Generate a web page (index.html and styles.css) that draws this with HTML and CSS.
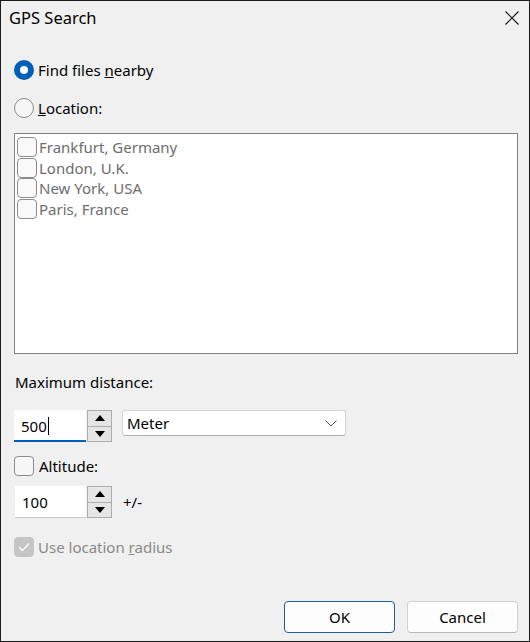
FILE: index.html
```html
<!DOCTYPE html>
<html>
<head>
<meta charset="utf-8">
<link rel="stylesheet" href="styles.css">
</head>
<body>
<div class="window">
  <div class="titlebar">
    <span class="title">GPS Search</span>
    <svg class="close" width="16" height="16" viewBox="0 0 16 16"><path d="M1.5 1.5 L14.5 14.5 M14.5 1.5 L1.5 14.5" stroke="#1a1a1a" stroke-width="1.2" fill="none"/></svg>
  </div>
  <div class="content">
    <div class="row radio-row first">
      <span class="radio checked"></span><span class="label">Find files <u>n</u>earby</span>
    </div>
    <div class="row radio-row second">
      <span class="radio"></span><span class="label"><u>L</u>ocation:</span>
    </div>
    <div class="listbox">
      <div class="item"><span class="cb"></span><span>Frankfurt, Germany</span></div>
      <div class="item"><span class="cb"></span><span>London, U.K.</span></div>
      <div class="item"><span class="cb"></span><span>New York, USA</span></div>
      <div class="item"><span class="cb"></span><span>Paris, France</span></div>
    </div>
    <div class="row section-label">Maximum distance:</div>
    <div class="row spin-row">
      <div class="spin">
        <div class="spin-input focused"><span>500</span><span class="caret"></span></div>
        <div class="spin-btns">
          <div class="sbtn"><svg width="10" height="6" viewBox="0 0 10 6"><path d="M0 6 L5 0 L10 6 Z" fill="#000"/></svg></div>
          <div class="sbtn"><svg width="10" height="6" viewBox="0 0 10 6"><path d="M0 0 L5 6 L10 0 Z" fill="#000"/></svg></div>
        </div>
      </div>
      <div class="combo"><span>Meter</span><svg width="12" height="7" viewBox="0 0 12 7"><path d="M0.5 0.5 L6 6 L11.5 0.5" stroke="#555" stroke-width="1" fill="none"/></svg></div>
    </div>
    <div class="row check-row altitude">
      <span class="box"></span><span class="label">Altitude:</span>
    </div>
    <div class="row spin-row second-spin">
      <div class="spin">
        <div class="spin-input"><span>100</span></div>
        <div class="spin-btns">
          <div class="sbtn"><svg width="10" height="6" viewBox="0 0 10 6"><path d="M0 6 L5 0 L10 6 Z" fill="#000"/></svg></div>
          <div class="sbtn"><svg width="10" height="6" viewBox="0 0 10 6"><path d="M0 0 L5 6 L10 0 Z" fill="#000"/></svg></div>
        </div>
      </div>
      <span class="plusminus">+/-</span>
    </div>
    <div class="row check-row radius">
      <span class="box disabled-checked"><svg width="12" height="10" viewBox="0 0 12 10"><path d="M1 5 L4.5 8.5 L11 1.5" stroke="#fff" stroke-width="1.3" fill="none"/></svg></span><span class="label disabled">Use location <u>r</u>adius</span>
    </div>
    <div class="buttons">
      <div class="btn default">OK</div>
      <div class="btn">Cancel</div>
    </div>
  </div>
</div>
</body>
</html>
```
FILE: styles.css
```css
* { box-sizing: border-box; }
html, body { margin: 0; padding: 0; }
body {
  font-family: "Noto Sans", "Open Sans", sans-serif;
  font-size: 15px;
  color: #000;
  background: #f0f0f0;
}
.window {
  width: 530px;
  height: 642px;
  border: 1px solid #1a1a1a;
  background: #f0f0f0;
  display: flex;
  flex-direction: column;
}
.titlebar {
  height: 33px;
  display: flex;
  align-items: center;
  justify-content: space-between;
  padding: 0 9px 0 8px;
}
.title { font-size: 16.5px; }
.content {
  flex: 1;
  display: flex;
  flex-direction: column;
  padding: 0 11px 8px 13px;
}
.row { display: flex; align-items: center; }
.radio-row { height: 24px; }
.radio-row.first { margin-top: 24px; }
.radio-row.second { margin-top: 14px; }
.radio {
  width: 20px; height: 20px;
  border-radius: 50%;
  border: 1px solid #8a8a8a;
  background: #f7f7f7;
  margin-right: 4px;
  flex: none;
}
.radio.checked {
  border: none;
  background: #005fb8;
  position: relative;
}
.radio.checked::after {
  content: "";
  position: absolute;
  left: 6px; top: 6px;
  width: 8px; height: 8px;
  border-radius: 50%;
  background: #fff;
}
.listbox {
  margin-top: 13px;
  height: 221px;
  background: #fff;
  border: 1px solid #828282;
  padding: 3px 0 0 2px;
  color: #6d6d6d;
}
.item {
  display: flex;
  align-items: center;
  height: 20.6px;
}
.cb {
  width: 20px; height: 20px;
  border: 1px solid #8c8c8c;
  border-radius: 4px;
  background: #f9f9f9;
  margin-right: 2px;
  flex: none;
}
.section-label { margin-top: 16px; height: 24px; padding-left: 1px; }
.spin-row { margin-top: 16px; height: 32px; align-items: flex-start; }
.spin { display: flex; height: 32px; }
.spin-input {
  width: 72px;
  height: 32px;
  background: #fff;
  border-bottom: 1px solid #c8c8c8;
  display: flex;
  align-items: center;
  padding-left: 7px;
}
.spin-input.focused { border-bottom: 2px solid #005fb8; padding-top: 1px; }
.caret { width: 1px; height: 18px; background: #000; margin-left: 1px; }
.spin-btns {
  width: 25px;
  display: flex;
  flex-direction: column;
  margin-left: 1px;
}
.sbtn {
  flex: 1;
  border: 1px solid #adadad;
  background: #e5e5e5;
  display: flex;
  align-items: center;
  justify-content: center;
}
.sbtn + .sbtn { border-top: none; }
.combo {
  margin-left: 10px;
  width: 224px;
  height: 26px;
  background: #fff;
  border: 1px solid #d6d6d6;
  border-bottom-color: #b0b0b0;
  border-radius: 3px;
  display: flex;
  align-items: center;
  justify-content: space-between;
  padding: 0 8px 0 4px;
}
.check-row { height: 22px; }
.altitude { margin-top: 13px; }
.box {
  width: 20px; height: 20px;
  border: 1px solid #8a8a8a;
  border-radius: 4px;
  background: #f7f7f7;
  margin-right: 5px;
  flex: none;
  display: flex;
  align-items: center;
  justify-content: center;
}
.box.disabled-checked { background: #c5c5c5; border-color: #c5c5c5; margin-right: 4px; }
.second-spin { margin-top: 9px; }
.second-spin .spin-input { margin-left: 1px; width: 71px; }
.plusminus { margin-left: 11px; align-self: center; }
.radius { margin-top: 18px; }
.label.disabled { color: #8a8a8a; }
.buttons {
  margin-top: auto;
  display: flex;
  justify-content: flex-end;
  gap: 12px;
}
.btn {
  width: 111px;
  height: 32px;
  border: 1px solid #d0d0d0;
  border-bottom-color: #b8b8b8;
  border-radius: 4px;
  background: #fdfdfd;
  display: flex;
  align-items: center;
  justify-content: center;
}
.btn.default { border-color: #1d5f99; }
```
